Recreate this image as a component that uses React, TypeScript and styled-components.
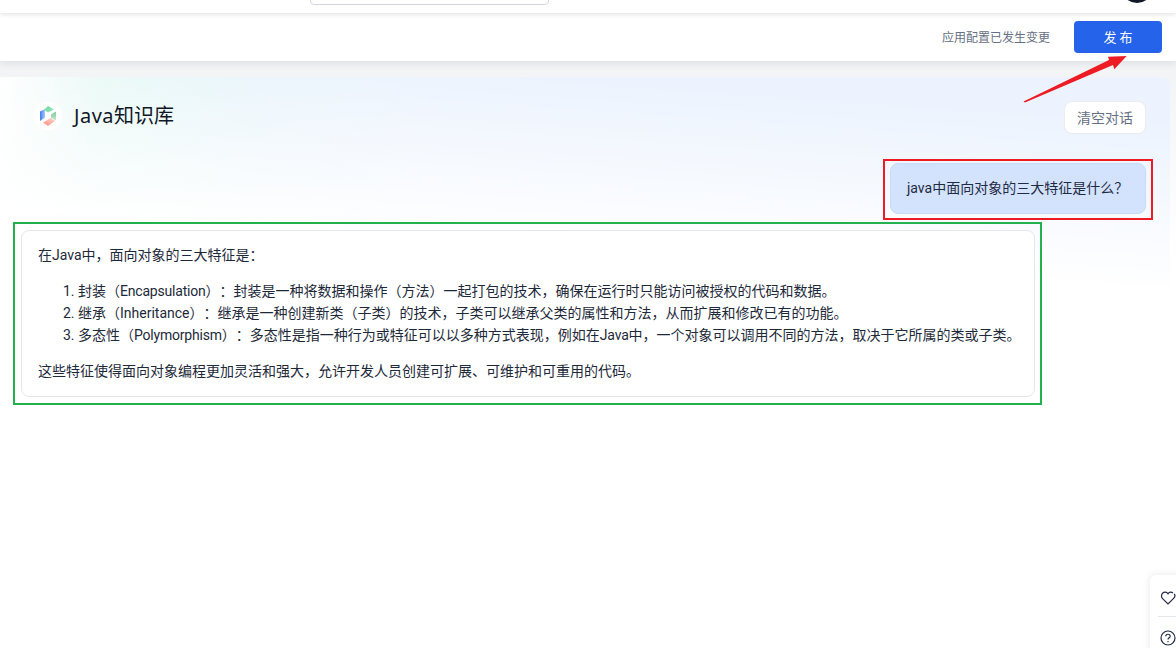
import React from "react";
import styled, { createGlobalStyle } from "styled-components";

const Global = createGlobalStyle`
  html, body { margin: 0; padding: 0; background: #fff; height: 100%; overflow: hidden; }
  * { box-sizing: border-box; }
  #root { height: 648px; }
`;

const fontStack = `Roboto, "Noto Sans CJK SC", "Noto Sans", sans-serif`;

const Page = styled.div`
  position: relative;
  width: 1176px;
  height: 648px;
  overflow: hidden;
  background: #f3f4f6;
  font-family: ${fontStack};
  color: #1f2937;
  display: flex;
  flex-direction: column;
  text-spacing-trim: space-all;
`;

const TopBar = styled.header`
  height: 13px;
  flex: none;
  background: #fff;
  box-shadow: 0 1px 5px rgba(16, 24, 40, 0.14);
  position: relative;
  z-index: 3;
`;

const SearchStub = styled.div`
  position: absolute;
  left: 310px;
  top: -20px;
  width: 239px;
  height: 25px;
  border: 1px solid #d5d7dc;
  border-radius: 4px;
  background: #fff;
`;

const Avatar = styled.div`
  position: absolute;
  left: 1121px;
  top: -29px;
  width: 32px;
  height: 32px;
  border-radius: 50%;
  background: #101828;
`;

const ActionBar = styled.div`
  height: 48px;
  flex: none;
  background: #fff;
  display: flex;
  align-items: center;
  justify-content: flex-end;
  padding: 0 14px 0 0;
  gap: 24px;
  box-shadow: 0 2px 8px rgba(16, 24, 40, 0.1);
  position: relative;
  z-index: 2;
`;

const Status = styled.span`
  font-size: 12px;
  line-height: 16px;
  margin-top: 2px;
  color: #667085;
`;

const Publish = styled.button`
  width: 88px;
  height: 32px;
  border: 0;
  border-radius: 4px;
  background: #2563eb;
  color: #fff;
  font: 400 13px ${fontStack};
  letter-spacing: 3px;
  padding: 0 0 1px 3px;
`;

const Panel = styled.main`
  flex: 1;
  margin: 16px 6px 0 0;
  border-radius: 0 8px 0 0;
  background:
    linear-gradient(184deg, rgba(255, 255, 255, 0) 40px, #fff 215px, #fff 100%),
    linear-gradient(100deg, #ffffff 0, #e6f8f5 100px, #e8f4fb 250px, #ecf3fe 420px, #ecf3fe 100%);
  display: flex;
  flex-direction: column;
  position: relative;
`;

const PanelTail = styled.div`
  position: absolute;
  top: 77px;
  right: 0;
  bottom: 0;
  width: 6px;
  background: linear-gradient(180deg, #f3f4f6 0, #fff 170px);
`;

const PanelHeader = styled.div`
  display: flex;
  align-items: center;
  height: 78px;
  padding: 0 24px 0 34px;
`;

const Logo = styled.div`
  width: 28px;
  height: 28px;
  border-radius: 50%;
  background: #fff;
  display: flex;
  align-items: center;
  justify-content: center;
  margin-right: 12px;
`;

const Title = styled.h1`
  margin: 0;
  font-size: 20px;
  line-height: 28px;
  font-weight: 400;
  color: #101828;
  flex: 1;
`;

const TitleLatin = styled.span`
  font-family: "Noto Sans", sans-serif;
  letter-spacing: 0.5px;
`;

const ClearButton = styled.button`
  width: 82px;
  height: 33px;
  margin-top: 2px;
  border: 1px solid #eaecf0;
  border-radius: 8px;
  background: #fff;
  color: #667085;
  font: 400 14px ${fontStack};
  padding: 0;
`;

const Chat = styled.div`
  display: flex;
  flex-direction: column;
  padding: 8px 24px 0 21px;
  gap: 16px;
`;

const Question = styled.div`
  align-self: flex-end;
  height: 51px;
  width: 256px;
  padding: 0 0 3px 16px;
  display: flex;
  align-items: center;
  background: #d3e3fd;
  border: 1px solid #c7daf9;
  border-radius: 8px;
  font-size: 14px;
  color: #1f2a44;
`;

const Answer = styled.article`
  width: 1014px;
  height: 167px;
  padding: 13px 16px 0;
  background: #fff;
  border: 1px solid #e4e7ec;
  border-radius: 8px;
  font-size: 14px;
  line-height: 22px;
  color: #1d2939;
  white-space: nowrap;
`;

const Para = styled.p`
  margin: 0;
`;

const Steps = styled.ol`
  margin: 14px 0;
  padding: 0 0 0 40px;
`;

const Term = styled.span`
  letter-spacing: -0.2px;
`;

const Dock = styled.aside`
  position: absolute;
  left: 1150px;
  top: 575px;
  width: 40px;
  height: 90px;
  background: #fff;
  border-radius: 6px 0 0 0;
  box-shadow: 0 0 8px rgba(16, 24, 40, 0.1);
  padding: 15px 0 0 10px;
  z-index: 4;
`;

const DockDivider = styled.div`
  width: 26px;
  height: 1px;
  background: #e4e7ec;
  margin: 10px 0 13px -2px;
`;

const DockIcon = styled.svg`
  display: block;
  fill: none;
  stroke: #1f2a44;
  stroke-width: 1.2;
`;

const Frame = styled.div<{ $c: string; $x: number; $y: number; $w: number; $h: number }>`
  position: absolute;
  left: ${(p) => p.$x}px;
  top: ${(p) => p.$y}px;
  width: ${(p) => p.$w}px;
  height: ${(p) => p.$h}px;
  border: 2px solid ${(p) => p.$c};
  pointer-events: none;
  z-index: 5;
`;

const ArrowSvg = styled.svg`
  position: absolute;
  left: 1020px;
  top: 50px;
  z-index: 6;
`;

export default function App() {
  return (
    <Page>
      <Global />
      <TopBar>
        <SearchStub />
        <Avatar />
      </TopBar>
      <ActionBar>
        <Status>应用配置已发生变更</Status>
        <Publish>发布</Publish>
      </ActionBar>
      <PanelTail />
      <Panel>
        <PanelHeader>
          <Logo>
            <svg width="18" height="21" viewBox="0 0 18 21">
              <defs>
                <linearGradient id="lg1" x1="0" y1="0" x2="1" y2="1">
                  <stop offset="0" stopColor="#5fdc9f" />
                  <stop offset="1" stopColor="#a5e3be" />
                </linearGradient>
                <linearGradient id="lg2" x1="0" y1="0" x2="1" y2="0">
                  <stop offset="0" stopColor="#3f7cf0" />
                  <stop offset="1" stopColor="#a9c8fa" />
                </linearGradient>
                <linearGradient id="lg3" x1="0" y1="1" x2="1" y2="0">
                  <stop offset="0" stopColor="#f98c7a" />
                  <stop offset="1" stopColor="#fbd9cf" />
                </linearGradient>
                <linearGradient id="lg4" x1="0" y1="0" x2="0" y2="1">
                  <stop offset="0" stopColor="#72cf93" />
                  <stop offset="1" stopColor="#cfe3d6" />
                </linearGradient>
              </defs>
              <path d="M9 0 L15 3.5 L9 6.5 L5 4 Z" fill="url(#lg1)" />
              <path d="M1 5.5 L6 3 L6 11.5 L1 15 Z" fill="url(#lg2)" />
              <path d="M17 5.5 L17 14.5 L12 11.5 L12 8.5 Z" fill="url(#lg4)" />
              <path d="M4 16.5 L12 12 L16 15 L9 20 Z" fill="url(#lg3)" />
            </svg>
          </Logo>
          <Title><TitleLatin>Java</TitleLatin>知识库</Title>
          <ClearButton>清空对话</ClearButton>
        </PanelHeader>
        <Chat>
          <Question>java中面向对象的三大特征是什么？</Question>
          <Answer>
            <Para>在Java中，面向对象的三大特征是：</Para>
            <Steps>
              <li>封装（<Term>Encapsulation</Term>）：封装是一种将数据和操作（方法）一起打包的技术，确保在运行时只能访问被授权的代码和数据。</li>
              <li>继承（Inheritance）：继承是一种创建新类（子类）的技术，子类可以继承父类的属性和方法，从而扩展和修改已有的功能。</li>
              <li>多态性（<Term>Polymorphism</Term>）：多态性是指一种行为或特征可以以多种方式表现，例如在<Term>Java</Term>中，一个对象可以调用不同的方法，取决于它所属的类或子类。</li>
            </Steps>
            <Para>这些特征使得面向对象编程更加灵活和强大，允许开发人员创建可扩展、可维护和可重用的代码。</Para>
          </Answer>
        </Chat>
      </Panel>
      <Dock>
        <DockIcon width="16" height="16" viewBox="0 0 16 16">
          <path d="M13 3 C11 1.4 9 2 8 3.8 C7 2 4.5 1.5 2.8 3 C1 4.6 1.2 7.2 2.6 8.6 L8 14 L13.4 8.6 C14.8 7.2 15.2 5 14.2 3.8" />
        </DockIcon>
        <DockDivider />
        <DockIcon width="16" height="16" viewBox="0 0 16 16">
          <circle cx="8" cy="8" r="7" />
          <path d="M5.8 6.2 C5.8 3.6 10.2 3.6 10.2 6.2 C10.2 7.8 8 7.8 8 9.6" />
          <path d="M8 11 V12.3" />
        </DockIcon>
      </Dock>
      <Frame $c="#ed1c24" $x={883} $y={159} $w={270} $h={61} />
      <Frame $c="#22b14c" $x={13} $y={222} $w={1029} $h={183} />
      <ArrowSvg width="120" height="60" viewBox="0 0 120 60">
        <path d="M3.5 51.5 L89 10 L88 6.7 L106.7 6 L94.3 19.3 L93 15 L5 52.5 Z" fill="#ed1c24" />
      </ArrowSvg>
    </Page>
  );
}
